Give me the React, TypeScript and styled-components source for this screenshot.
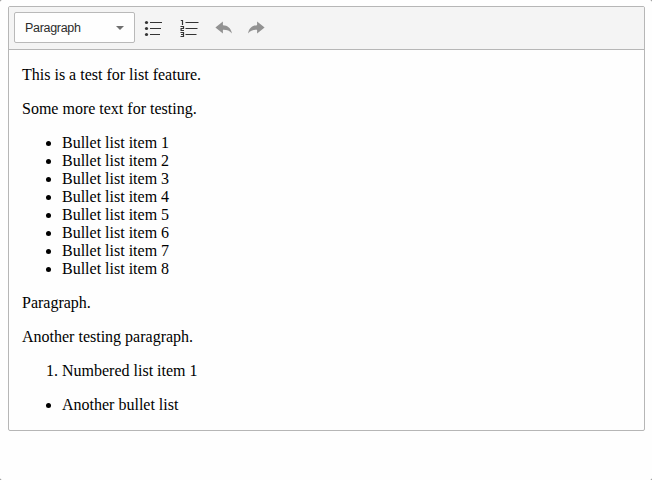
import React from "react";
import styled, { createGlobalStyle } from "styled-components";

const GlobalStyle = createGlobalStyle`
  html, body { margin: 0; background: #777; overflow: hidden; }
  *, *::before, *::after { box-sizing: border-box; }
`;

const Page = styled.main`
  height: 480px;
  padding: 6px 7px 49px 8px;
  background: #fefefe;
  border-radius: 2px;
`;

const Editor = styled.section`
  display: flex;
  flex-direction: column;
  height: 425px;
  border: 1px solid #b6b6b6;
  border-radius: 2px;
  background: #fefefe;
  overflow: hidden;
`;

const Toolbar = styled.div`
  display: flex;
  align-items: flex-start;
  flex: none;
  height: 43px;
  padding: 5px 5px 0;
  border-bottom: 1px solid #b6b6b6;
  background: #f4f4f4;
`;

const HeadingSelect = styled.button`
  display: flex;
  align-items: center;
  justify-content: space-between;
  width: 121px;
  height: 31px;
  margin: 0 1px 0 0;
  padding: 1px 10px 0;
  border: 1px solid #b9b9b9;
  border-radius: 2px;
  background: #fefefe;
  color: #2c2c2c;
  font: 12.5px/18px "Liberation Sans", Arial, sans-serif;
  letter-spacing: -0.3px;
`;

const ToolButton = styled.button<{ $width: number; $muted?: boolean }>`
  display: block;
  width: ${(p) => p.$width}px;
  height: 31px;
  padding: 0;
  border: 0;
  background: transparent;
  color: ${(p) => (p.$muted ? "#929292" : "#333")};

  svg {
    display: block;
    margin: 1px auto 0;
  }
`;

const Content = styled.article`
  flex: 1;
  padding: 16px 13px 0;
  color: #000;
  font: 16px/18px "Liberation Serif", "Times New Roman", serif;
`;

const Paragraph = styled.p`
  margin: 0 0 16px;
`;

const BulletList = styled.ul`
  margin: 0 0 16px;
  padding-left: 40px;
`;

const NumberedList = styled.ol`
  margin: 0 0 16px;
  padding-left: 40px;
`;

const Caret = () => (
  <svg width="8" height="4" viewBox="0 0 8 4">
    <path d="M0 0h8L4 4z" fill="#6f6f6f" />
  </svg>
);

const BulletIcon = () => (
  <svg width="20" height="20" viewBox="0 0 20 20" fill="currentColor">
    <circle cx="3.5" cy="4.5" r="1.6" />
    <circle cx="3.5" cy="10.5" r="1.6" />
    <circle cx="3.5" cy="16.5" r="1.6" />
    <path d="M7 4h12v1H7zM7 10h11v1H7zM7 16h10v1H7z" />
  </svg>
);

const NumberIcon = () => (
  <svg width="20" height="20" viewBox="0 0 20 20" fill="none" stroke="currentColor">
    <path d="M6.5 4.5h13M6.5 10.5h12M6.5 16.5h11" />
    <path strokeWidth="1.2" d="M1.8 2.5h1.7V7M1.5 8.5h3v2h-2.4v2H5M1.5 14.5h3v4h-3M2 16.5h2.5" />
  </svg>
);

const UndoIcon = () => (
  <svg width="20" height="20" viewBox="0 0 20 20" fill="currentColor">
    <path d="M8.9 3.6v3.6c4.7.2 8.2 2.9 9 8.2-2.2-2.8-5-3.8-9-3.7v3.8L1.4 9.5z" />
  </svg>
);

const RedoIcon = () => (
  <svg width="20" height="20" viewBox="0 0 20 20" fill="currentColor">
    <path d="M11.1 3.6v3.6c-4.7.2-8.2 2.9-9 8.2 2.2-2.8 5-3.8 9-3.7v3.8l7.5-6z" />
  </svg>
);

const items = [1, 2, 3, 4, 5, 6, 7, 8];

export default function App() {
  return (
    <>
      <GlobalStyle />
      <Page>
        <Editor>
          <Toolbar>
            <HeadingSelect>
              Paragraph
              <Caret />
            </HeadingSelect>
            <ToolButton $width={34} aria-label="Bulleted list"><BulletIcon /></ToolButton>
            <ToolButton $width={38} aria-label="Numbered list"><NumberIcon /></ToolButton>
            <ToolButton $width={32} $muted aria-label="Undo"><UndoIcon /></ToolButton>
            <ToolButton $width={32} $muted aria-label="Redo"><RedoIcon /></ToolButton>
          </Toolbar>
          <Content>
            <Paragraph>This is a test for list feature.</Paragraph>
            <Paragraph>Some more text for testing.</Paragraph>
            <BulletList>
              {items.map((n) => (
                <li key={n}>Bullet list item {n}</li>
              ))}
            </BulletList>
            <Paragraph>Paragraph.</Paragraph>
            <Paragraph>Another testing paragraph.</Paragraph>
            <NumberedList>
              <li>Numbered list item 1</li>
            </NumberedList>
            <BulletList>
              <li>Another bullet list</li>
            </BulletList>
          </Content>
        </Editor>
      </Page>
    </>
  );
}
